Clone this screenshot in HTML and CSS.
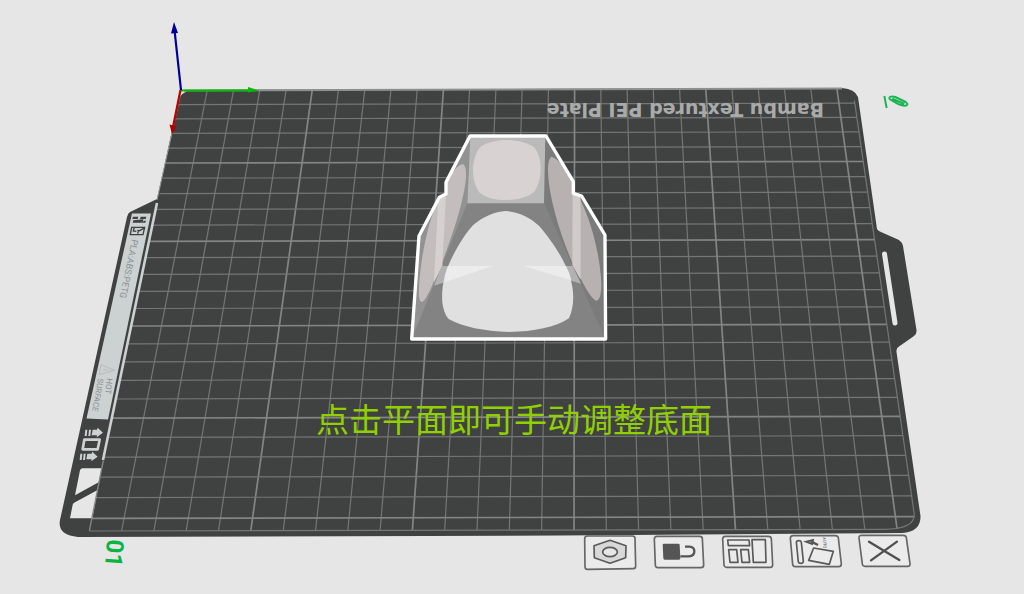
FILE: index.html
```html
<!DOCTYPE html>
<html lang="zh-CN">
<head>
<meta charset="utf-8">
<meta name="viewport" content="width=device-width, initial-scale=1">
<title>Bambu Textured PEI Plate</title>
<link rel="stylesheet" href="styles.css">
</head>
<body>
<main class="stage">
  <svg class="scene" viewBox="0 0 1024 594" role="img" aria-label="Build plate 01">
    <!-- plate body -->
    <path class="plate" d="M190 90L842 88Q855 89 858 97L877 229Q878 231 881 232L899 240Q902 242 903 246L916.500 330Q917 334 914 336L899 346.500Q896 348 896.500 352L920.500 516Q921 532 902 533L560 535.500L78 537Q57 535 60 520L127 217Q128 213 130 212L157 199L179 99Q181 93 190 90Z"/>
    <path class="slot" d="M884.500 254L895 323"/>
    <g id="grid"></g>
    <path class="rim" d="M184 90.500L842 88.500"/>

    <!-- left label strip -->
    <path class="label" d="M132 213.500H151L108 419.500L86.500 418.500Z"/>
    <path class="strip" d="M157 203L103 460"/>
    <path class="strip-edge" d="M180 97L157 200"/>
    <g transform="translate(50 200) scale(.3333)">
      <path class="mark" d="M249 50h16l-2 7h-16zM272 50h17l-2 7h-17zM250 61l30-3-2 10h-30zM281 62h7l-2 6h-8z"/>
      <path class="mark-line" d="M245 82h39l-5 22h-38zM253 83l-3 10 9 1M263 101l2-7 16-9M262 91l8 1"/>
      <path class="faint-line" d="M153 494l41 17-46 13zM160 510h16M181 510h3"/>
    </g>
    <g class="print">
      <text class="print-main" transform="translate(132 239) rotate(102)">PLA:ABS:PETG</text>
      <text class="print-small" transform="translate(107 378) rotate(97)">HOT</text>
      <text class="print-small" transform="translate(98 378) rotate(100)">SURFACE</text>
    </g>
    <g transform="translate(50 360) scale(.3333)">
      <path class="light" d="M106 209h6l-2 19h-6zM117 209h6l-2 19h-6zM128 209h13l2-6 16 15-19 14 1-6h-16zM91 281h6l-2 19h-6zM101 281h6l-2 19h-6zM112 281h13l2-6 16 15-19 14 1-6h-16z"/>
      <path class="light-line" d="M103 239h46l-6 29H98z"/>
      <path class="cutout" d="M98 325h57l-9 42-71 39 15-75q2-6 8-6zM75 427l68-37-16 85H60l8-41q1-5 7-7z"/>
      <path class="left-rule" d="M160 302L118 513"/>
    </g>

    <text class="plate-name" transform="translate(824 103) rotate(180)">Bambu Textured PEI Plate</text>
    <text class="plate-number" transform="translate(107 539) rotate(94)">01</text>

    <!-- selected model with candidate faces -->
    <g transform="translate(390 120) scale(.3333)">
      <path fill="#838383" d="M240 48H468L550 185V220L575 228L645 345L647 657H65L87 348L148 232L168 222V187Z"/>
      <path fill="#929292" d="M241 50L232 250L65 657L87 348L148 232L168 222V187Z"/>
      <path fill="#7b7b7b" d="M466 50L462 250L647 657L645 345L575 228L550 220V185Z"/>
      <path fill="#bababa" d="M241 52H466L462 250H232Z"/>
      <path fill="#d8d3d2" d="M350 60C383 60 414 69 432 82C447 98 452 123 452 151C451 179 443 201 432 216C412 233 381 240 347 240C315 240 288 233 269 218C256 201 250 181 249 151C250 122 257 96 272 80C291 67 319 60 350 60Z"/>
      <path fill="#c3bebd" d="M168 187C184 160 202 135 218 132C226 135 229 148 228 174C222 239 190 342 157 424L132 482C119 515 105 544 95 546C86 544 86 523 88 488C94 403 115 306 145 238L168 222Z"/>
      <path fill="#b7b2b1" d="M485 110C510 120 531 149 550 185V222L572 242C603 302 630 402 634 490C634 525 629 543 618 542C603 535 583 499 572 475L548 430C508 337 476 229 474 153C474 127 478 113 485 110Z"/>
      <path fill="#d6d1d0" d="M145 235L168 222L157 438L132 487Z"/>
      <path fill="#d0cbca" d="M548 220L572 229V479L547 435Z"/>
      <path fill="#b2b2b2" d="M155 438H310L132 497ZM400 438H548L573 491Z"/>
      <path fill="#e0e0e0" d="M348 273C386 276 419 292 447 317C483 358 525 420 540 471C552 507 555 555 537 595C495 622 433 635 357 636C283 634 217 620 176 597C154 571 151 525 164 468C177 420 220 346 249 316C278 290 314 275 348 273Z"/>
      <path fill="#ececec" d="M174 438H310L163 487Q165 460 174 438ZM400 438H528Q540 462 544 481Z"/>
      <path class="outline" d="M240 48H468L550 185V220L575 228L645 345L647 657H65L87 348L148 232L168 222V187Z"/>
    </g>

    <!-- origin axes -->
    <path class="axis-green" d="M181 90.500H250"/>
    <path fill="#0b0" d="M248 87L259 90.500L248 92.500Z"/>
    <path class="axis-blue" d="M181 90L174.500 30"/>
    <path fill="#009" d="M174 22L178 33L171 33.500Z"/>
    <path class="axis-red" d="M180.500 90L173 127"/>
    <path fill="#a00" d="M169.500 124.500L176.500 126.500L172 134Z"/>
  </svg>

  <p class="hint">点击平面即可手动调整底面</p>

  <button class="icon-button rename" type="button" aria-label="编辑盘名称">
    <svg viewBox="1176 42 84 48"><path class="pencil" d="M1183 48l7 36M1198 54c0-4 8-6 18-3l31 15c8 5 6 11-2 11-7 0-14-2-20-5l-22-12q-5-3-5-6zM1207 56l36 16"/></svg>
  </button>

  <nav class="tools" aria-label="盘操作">
    <button class="icon-button" type="button" aria-label="盘设置">
      <svg viewBox="42 75 156 108"><path class="frame" d="M52 78H187Q195 78 195 85L197 168Q197 176 190 176L53 178Q45 178 45 170L44 86Q44 78 52 78Z"/><path class="glyph pale" d="M120 91L168 107L167 143L120 160L73 143L72 107Z"/><ellipse class="glyph clear" cx="120" cy="126" rx="22" ry="14"/></svg>
    </button>
    <button class="icon-button" type="button" aria-label="锁定盘">
      <svg viewBox="249 75 156 108"><path class="frame" d="M261 79H389Q397 79 397 86L401 165Q401 173 393 173H264Q257 173 256 166L253 87Q253 79 261 79Z"/><path fill="#555" d="M282 101H325Q329 101 329 105L331 145Q331 149 327 149H284Q280 149 280 145L278 105Q278 101 282 101Z"/><path class="shackle" d="M331 139H357Q373 138 373 124Q373 111 358 110L345 110"/></svg>
    </button>
    <button class="icon-button" type="button" aria-label="自动摆放">
      <svg viewBox="456 75 156 108"><path class="frame" d="M466 79H595Q603 79 604 86L608 164Q608 172 600 172H470Q463 172 462 165L458 87Q458 79 466 79Z"/><path class="glyph" d="M473 90H537L539 107H475ZM476 119H500L504 157H480ZM512 119H535L539 157H516ZM546 89H586L588 157H550Z"/></svg>
    </button>
    <button class="icon-button" type="button" aria-label="自动朝向">
      <svg viewBox="123 105 156 108"><path class="frame" d="M129 107H256Q264 107 265 114L274 192Q274 200 266 200H136Q129 200 128 193L121 115Q121 107 129 107Z"/><path class="glyph" d="M139 126Q140 122 146 122Q153 122 154 127L160 184Q159 190 153 190Q146 190 145 186ZM191 144L250 154L238 193L176 181Z"/><path class="arrow" d="M166 125L190 119L187 133Z"/><path class="shackle" d="M184 125L204 135"/><text class="auto" transform="translate(218 112) rotate(85)">AUTO</text></svg>
    </button>
    <button class="icon-button" type="button" aria-label="删除盘">
      <svg viewBox="330 105 156 108"><path class="frame" d="M335 106H460Q468 106 469 113L480 191Q481 199 473 199H345Q338 199 337 192L327 114Q326 106 335 106Z"/><path class="cross" d="M357 125L448 180M441 125L363 181"/></svg>
    </button>
  </nav>
</main>
<script src="grid.js"></script>
</body>
</html>
```
FILE: styles.css
```css
* { box-sizing: border-box; }

body {
  margin: 0;
  background: #e6e6e6;
  font-family: "Noto Sans CJK SC", "Noto Sans", sans-serif;
}

.stage {
  position: relative;
  width: 100%;
  aspect-ratio: 1024 / 594;
  overflow: hidden;
}

.scene { display: block; width: 100%; height: auto; }

.plate { fill: #404241; }
.slot { stroke: #e6e6e6; stroke-width: 5; stroke-linecap: round; }
.minor { stroke: #747675; stroke-width: 1.2; fill: none; }
.major { stroke: #838584; stroke-width: 1.7; fill: none; }
.rim { stroke: #8e9090; stroke-width: 2; }

.label { fill: #ccd1d2; }
.strip { stroke: #ccd1d2; stroke-width: 2.6; }
.strip-edge { stroke: #9a9d9c; stroke-width: 1; }
.mark { fill: #404241; }
.mark-line { fill: none; stroke: #404241; stroke-width: 4; }
.faint-line { fill: none; stroke: #adb1b2; stroke-width: 2; }
.light { fill: #ccd1d2; }
.light-line { fill: none; stroke: #ccd1d2; stroke-width: 8; stroke-linejoin: round; }
.cutout { fill: #e6e6e6; }
.left-rule { stroke: #858786; stroke-width: 4; }

.print { fill: #8b9091; font-family: Roboto, sans-serif; }
.print-main { font-size: 9px; }
.print-small { font-size: 8px; }
.plate-name {
  fill: #a9abaa;
  font: bold 19px "DejaVu Sans", sans-serif;
}
.plate-number {
  fill: #08b53f;
  font: bold 24px Roboto, sans-serif;
}

.outline { fill: none; stroke: #fff; stroke-width: 10; stroke-linejoin: round; }

.axis-green { stroke: #0b0; stroke-width: 2; }
.axis-blue { stroke: #009; stroke-width: 2.2; }
.axis-red { stroke: #b00; stroke-width: 2.2; }

.hint {
  position: absolute;
  top: 70.300%;
  left: 0;
  width: 100%;
  margin: 0;
  transform: translateY(-50%);
  padding-left: 4px;
  color: #90d000;
  font-size: 33px;
  line-height: 48px;
  text-align: center;
  white-space: nowrap;
}

.tools {
  position: absolute;
  top: 90%;
  left: 57%;
  display: flex;
  gap: 17px;
}

.icon-button {
  display: block;
  width: 52px;
  height: 36px;
  padding: 0;
  border: 0;
  background: transparent;
  cursor: pointer;
}
.icon-button svg { display: block; width: 100%; height: 100%; overflow: visible; }

.rename {
  position: absolute;
  top: 15.800%;
  left: 86.100%;
  width: 28px;
  height: 16px;
}

.pencil { fill: none; stroke: #18b552; stroke-width: 6; }
.frame { fill: #ebebeb; stroke: #666; stroke-width: 5; }
.glyph { fill: none; stroke: #5a5a5a; stroke-width: 5; stroke-linejoin: round; }
.pale { fill: #d8d8d8; }
.clear { fill: #e6e6e6; }
.shackle { fill: none; stroke: #555; stroke-width: 7; }
.arrow { fill: #777; stroke: #505050; stroke-width: 4; }
.cross { stroke: #505050; stroke-width: 7; stroke-linecap: round; }
.auto { fill: #555; font: 13px Roboto, sans-serif; }
```
FILE: grid.js
```js
// Projects the 256 mm plate grid, in centimetres, into the scene.
const SIZE = 25.6;
const grid = document.getElementById('grid');

function project(u, v) {
  const w = 1 - 0.00734 * v;
  const x = (181 + 26.24 * u - 4.238 * v) / w;
  const y = (90.5 - 0.058 * u + 13.31 * v) / w;
  return x.toFixed(1) + ' ' + y.toFixed(1);
}

function addPath(d, className) {
  const path = document.createElementNS('http://www.w3.org/2000/svg', 'path');
  path.setAttribute('d', d);
  path.setAttribute('class', className);
  grid.appendChild(path);
}

for (let i = 1; i <= 25; i++) {
  const className = i % 5 === 0 ? 'major' : 'minor';
  addPath('M' + project(i, 0) + 'L' + project(i, SIZE), className);
  addPath('M' + project(0, i) + 'L' + project(SIZE, i), className);
}
addPath(
  'M' + project(0, SIZE) + 'L' + project(24.6, SIZE) +
  'Q' + project(SIZE, SIZE) + ' ' + project(SIZE, 24.8) +
  'L' + project(SIZE, 0.8),
  'minor'
);
```
